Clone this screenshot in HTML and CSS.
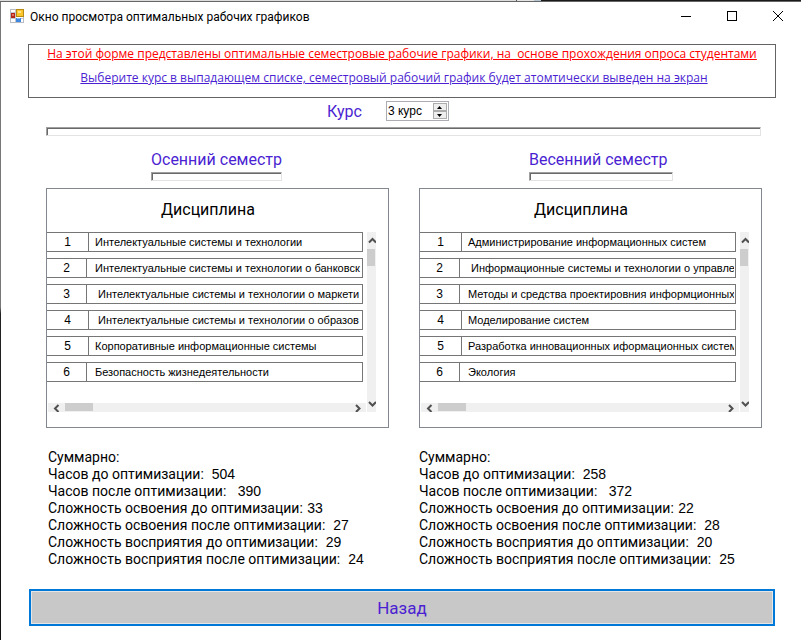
FILE: index.html
```html
<!DOCTYPE html>
<html lang="ru">
<head>
<meta charset="utf-8">
<title>Окно просмотра оптимальных рабочих графиков</title>
<link rel="stylesheet" href="styles.css">
</head>
<body>
<div class="backdrop"></div>
<div class="window">
  <header class="titlebar">
    <svg class="app-icon" width="14" height="14" viewBox="0 0 14 14" aria-hidden="true">
      <rect x="0.5" y="0.5" width="13" height="13" fill="#fff" stroke="#b9bcc2"/>
      <path d="M5.5 1v12M1 9.5h12M1 3.5h5" stroke="#c4c7cc" fill="none"/>
      <rect x="1" y="4" width="4" height="5" fill="#b3261a"/>
      <rect x="2" y="5" width="2" height="2" fill="#e0705c"/>
      <rect x="6.5" y="0.5" width="7" height="7" fill="#fbc52c" stroke="#b98a12"/>
      <rect x="8" y="2" width="3" height="2" fill="#fde48a"/>
      <rect x="6" y="9" width="5" height="4" fill="#3f86e0"/>
      <rect x="7" y="9" width="3" height="1" fill="#8dbaf2"/>
    </svg>
    <h1 class="title">Окно просмотра оптимальных рабочих графиков</h1>
    <div class="controls">
      <button type="button" aria-label="Свернуть"><svg width="10" height="10" viewBox="0 0 10 10"><path d="M0 5.5h10" stroke="#000"/></svg></button>
      <button type="button" aria-label="Развернуть"><svg width="10" height="10" viewBox="0 0 10 10"><rect x="0.5" y="0.5" width="9" height="9" fill="none" stroke="#000"/></svg></button>
      <button type="button" aria-label="Закрыть"><svg width="10" height="10" viewBox="0 0 10 10"><path d="M0 0l10 10M10 0L0 10" stroke="#000"/></svg></button>
    </div>
  </header>
  <main class="form">
    <section class="notice">
      <p class="notice-red">На этой форме представлены оптимальные семестровые рабочие графики, на&nbsp; основе прохождения опроса студентами</p>
      <p class="notice-blue">Выберите курс в выпадающем списке, семестровый рабочий график будет атомтически выведен на экран</p>
    </section>
    <div class="course">
      <label for="course">Курс</label>
      <div class="spinner">
        <input id="course" type="text" value="3 курс">
        <div class="spin-buttons">
          <button type="button" aria-label="Вверх"><svg width="5" height="3" viewBox="0 0 5 3"><path d="M0 3L2.5 0L5 3z"/></svg></button>
          <button type="button" aria-label="Вниз"><svg width="5" height="3" viewBox="0 0 5 3"><path d="M0 0L2.5 3L5 0z"/></svg></button>
        </div>
      </div>
    </div>
    <div class="rule rule-wide"></div>
    <div class="semesters">
      <section class="semester">
        <div class="semester-head autumn-head">
          <h2 class="heading">Осенний семестр</h2>
          <div class="rule"></div>
        </div>
        <div class="panel">
          <div class="panel-body">
            <table class="subjects">
              <caption>Дисциплина</caption>
              <tbody>
                <tr><td>1</td><td>Интелектуальные системы и технологии</td></tr>
                <tr class="slim"><td>2</td><td>Интелектуальные системы и технологии о банковск</td></tr>
                <tr class="slim"><td>3</td><td>&nbsp;Интелектуальные системы и технологии о маркети</td></tr>
                <tr><td>4</td><td>&nbsp;Интелектуальные системы и технологии о образов</td></tr>
                <tr><td>5</td><td>Корпоративные информационные системы</td></tr>
                <tr class="slim"><td>6</td><td>Безопасность жизнедеятельности</td></tr>
              </tbody>
            </table>
            <div class="vscroll">
              <svg width="9" height="17" viewBox="0 0 9 17"><path d="M2 10.5L5.5 7L9 10.5" /></svg>
              <i class="vthumb"></i>
              <svg class="end" width="9" height="17" viewBox="0 0 9 17"><path d="M2 7L5.5 10.5L9 7" /></svg>
            </div>
            <div class="hscroll">
              <svg width="17" height="9" viewBox="0 0 17 9"><path d="M10.5 2L7 5.5L10.5 9" /></svg>
              <i class="hthumb"></i>
              <svg class="end" width="17" height="9" viewBox="0 0 17 9"><path d="M7 2L10.5 5.5L7 9" /></svg>
            </div>
          </div>
        </div>
        <div class="summary summary-autumn">
          <p>Суммарно:</p>
          <p>Часов до оптимизации:  <span>504</span></p>
          <p>Часов после оптимизации:   <span>390</span></p>
          <p>Сложность освоения до оптимизации: <span>33</span></p>
          <p>Сложность освоения после оптимизации:  <span>27</span></p>
          <p>Сложность восприятия до оптимизации:  <span>29</span></p>
          <p>Сложность восприятия после оптимизации:  <span>24</span></p>
        </div>
      </section>
      <section class="semester">
        <div class="semester-head spring-head">
          <h2 class="heading">Весенний семестр</h2>
          <div class="rule"></div>
        </div>
        <div class="panel">
          <div class="panel-body">
            <table class="subjects">
              <caption>Дисциплина</caption>
              <tbody>
                <tr><td>1</td><td>Администрирование информационных систем</td></tr>
                <tr class="slim"><td>2</td><td>&nbsp;Информационные системы и технологии о управле</td></tr>
                <tr class="slim"><td>3</td><td>Методы и средства проектировния информционных</td></tr>
                <tr><td>4</td><td>Моделирование систем</td></tr>
                <tr><td>5</td><td>Разработка инновационных иформационных систем</td></tr>
                <tr class="slim"><td>6</td><td>Экология</td></tr>
              </tbody>
            </table>
            <div class="vscroll">
              <svg width="9" height="17" viewBox="0 0 9 17"><path d="M2 10.5L5.5 7L9 10.5" /></svg>
              <i class="vthumb"></i>
              <svg class="end" width="9" height="17" viewBox="0 0 9 17"><path d="M2 7L5.5 10.5L9 7" /></svg>
            </div>
            <div class="hscroll">
              <svg width="17" height="9" viewBox="0 0 17 9"><path d="M10.5 2L7 5.5L10.5 9" /></svg>
              <i class="hthumb"></i>
              <svg class="end" width="17" height="9" viewBox="0 0 17 9"><path d="M7 2L10.5 5.5L7 9" /></svg>
            </div>
          </div>
        </div>
        <div class="summary">
          <p>Суммарно:</p>
          <p>Часов до оптимизации:  <span>258</span></p>
          <p>Часов после оптимизации:   <span>372</span></p>
          <p>Сложность освоения до оптимизации: <span>22</span></p>
          <p>Сложность освоения после оптимизации:  <span>28</span></p>
          <p>Сложность восприятия до оптимизации:  <span>20</span></p>
          <p>Сложность восприятия после оптимизации:  <span>25</span></p>
        </div>
      </section>
    </div>
    <button type="button" class="back">Назад</button>
  </main>
</div>
</body>
</html>
```
FILE: styles.css
```css
* {
  box-sizing: border-box;
}

body {
  margin: 0;
  background: linear-gradient(to bottom, #777 48%, #222 49%, #111);
  color: #000;
  font-family: Roboto, "Liberation Sans", sans-serif;
}

h1,
h2,
p {
  margin: 0;
  font-weight: 400;
}

button {
  padding: 0;
  border: 0;
  background: none;
  font: inherit;
}

svg {
  display: block;
}

.backdrop {
  height: 2px;
  border-bottom: 1px solid #666;
  background: linear-gradient(to right, #dcdcdc 516px, #555 516px, #555 517px, #e4e4e4 517px, #e4e4e4 534px, #b4c4d0 534px, #b4c4d0 541px, #1a1a1a 541px);
}

.window {
  min-height: calc(100vh - 2px);
  margin-left: 1px;
  background: #fff;
}

.titlebar {
  display: flex;
  align-items: center;
  height: 28px;
  padding-left: 9px;
}

.title {
  flex: 1;
  margin-left: 6px;
  padding-top: 1px;
  font-size: 12px;
  line-height: 16px;
}

.controls {
  display: flex;
}

.controls button {
  display: grid;
  place-items: center;
  width: 46px;
  height: 26px;
}

.form {
  padding: 14px 25px 0 27px;
}

.notice {
  height: 54px;
  border: 1px solid #646464;
  font-family: "Open Sans", sans-serif;
  font-size: 12px;
  line-height: 18px;
  text-align: center;
  white-space: nowrap;
}

.notice-red {
  color: #f00;
  text-decoration: underline;
}

.notice-blue {
  margin-top: 6px;
  padding-right: 16px;
  color: #4b1fd2;
  text-decoration: underline;
}

.course {
  display: flex;
  justify-content: center;
  gap: 24px;
  height: 29px;
  padding-top: 3px;
  padding-right: 28px;
}

.course label {
  color: #4b1fd2;
  font-size: 16px;
  line-height: 22px;
}

.spinner {
  display: flex;
  width: 63px;
  height: 20px;
  padding: 1px;
  border: 1px solid #abadb3;
}

.spinner input {
  flex: 1;
  min-width: 0;
  padding: 0;
  border: 0;
  font-family: "Liberation Sans", sans-serif;
  font-size: 12px;
}

.spin-buttons {
  display: grid;
  width: 14px;
}

.spin-buttons button {
  display: grid;
  place-items: center;
  border: 1px solid #acacac;
  background: #eee;
}

.rule {
  height: 9px;
  border: 1px solid #e3e3e3;
  border-top-color: #a0a0a0;
  border-left-color: #a0a0a0;
  box-shadow: inset 1px 1px 0 #696969;
}

.rule-wide {
  margin: 0 15px 0 18px;
}

.semesters {
  display: grid;
  grid-template-columns: 1fr 1fr;
  gap: 30px;
  margin: 14px 14px 0 18px;
}

.semester-head {
  display: grid;
  gap: 2px;
}

.autumn-head {
  width: 131px;
  margin-left: 105px;
}

.spring-head {
  width: 144px;
  margin-left: 110px;
}

.heading {
  color: #4b1fd2;
  font-size: 16px;
  line-height: 20px;
  white-space: nowrap;
}

.panel {
  height: 240px;
  margin-top: 7px;
  border: 1px solid #828790;
}

.panel-body {
  display: grid;
  grid-template-columns: 1fr 9px;
  grid-template-rows: 43px 171px 9px;
  column-gap: 1px;
  padding-right: 12px;
}

.subjects {
  display: block;
  grid-area: 1 / 1 / 3 / 2;
  min-width: 0;
  margin-right: 3px;
  border-spacing: 0;
  font-family: "Liberation Sans", sans-serif;
  font-size: 11px;
}

.subjects caption {
  display: block;
  height: 43px;
  padding-top: 11px;
  padding-left: 6px;
  font-family: Roboto, sans-serif;
  font-size: 16px;
  line-height: 20px;
  text-align: center;
}

.subjects tbody {
  display: grid;
  gap: 6px;
}

.subjects tr {
  display: grid;
  grid-template-columns: 41px minmax(0, 1fr);
  height: 20px;
  border: 1px solid #767676;
  border-left: 0;
}

.subjects .slim {
  grid-template-columns: 39px minmax(0, 1fr);
}

.subjects td {
  margin-right: 1px;
  padding: 0;
  overflow: hidden;
  line-height: 18px;
  white-space: nowrap;
}

.subjects td:first-child {
  margin-right: 0;
  font-size: 12px;
  text-align: center;
}

.subjects td:last-child {
  padding-left: 6px;
  border-left: 1px solid #767676;
}

.subjects .slim td:last-child {
  padding-left: 8px;
}

.vscroll,
.hscroll {
  display: flex;
  background: #f0f0f0;
}

.vscroll path,
.hscroll path {
  fill: none;
  stroke: #505050;
  stroke-width: 2;
}

.vscroll {
  grid-area: 2 / 2 / 4 / 3;
  flex-direction: column;
}

.hscroll {
  grid-area: 3 / 1 / 4 / 2;
  margin-left: 1px;
}

.vthumb {
  width: 8px;
  height: 17px;
  background: #cdcdcd;
}

.hthumb {
  width: 28px;
  height: 8px;
  background: #cdcdcd;
}

.vscroll .end {
  margin-top: auto;
}

.hscroll .end {
  margin-left: auto;
}

.summary {
  margin-top: 21px;
  font-size: 14px;
  line-height: 17px;
}

.summary p {
  white-space: pre;
}

.summary span {
  margin-left: 1px;
  font-family: "Liberation Sans", sans-serif;
}

.summary-autumn {
  padding-left: 2px;
}

.back {
  display: block;
  width: calc(100% - 2px);
  height: 37px;
  margin: 21px 1px 0;
  border: 2px solid #0078d7;
  background: #c8c8c8;
  box-shadow: inset 0 0 0 1px #e6e6e6;
  color: #4b1fd2;
  font-size: 17px;
}
```
